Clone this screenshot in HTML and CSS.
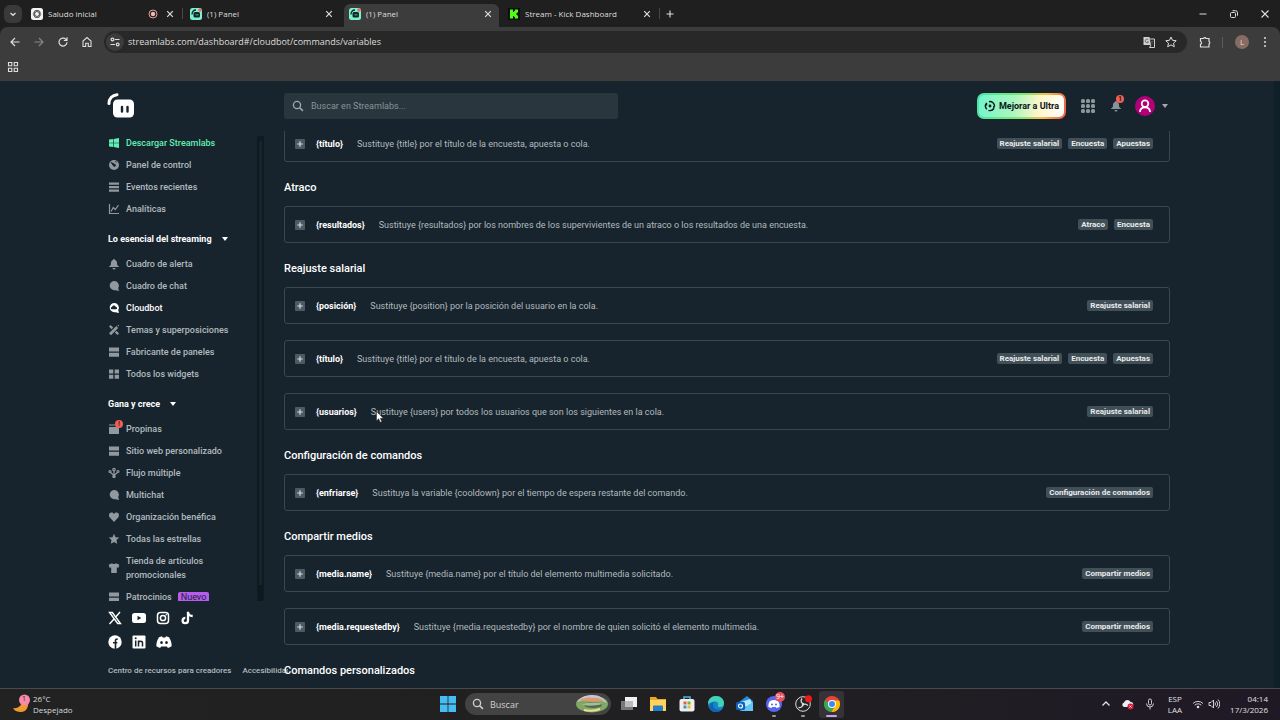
FILE: index.html
```html
<!DOCTYPE html>
<html lang="es">
<head>
<meta charset="utf-8">
<title>(1) Panel</title>
<link rel="stylesheet" href="styles.css">
</head>
<body>
<svg class="defs" width="0" height="0" aria-hidden="true">
  <symbol id="x" viewBox="0 0 10 10"><path d="M2.2 2.2l5.6 5.6M7.8 2.2L2.2 7.8" stroke="currentColor" stroke-width="1.2" fill="none"/></symbol>
  <symbol id="panel" viewBox="0 0 12 12"><rect width="12" height="12" rx="2.5" fill="#7cf2cd"/><path d="M2 6.5C2 3.500 3.500 2 6 2" stroke="#12252c" stroke-width="1.300" fill="none"/><rect x="3.500" y="4" width="6.500" height="5.500" rx="1.500" fill="#12252c"/><path d="M5.500 6h3v1.500h-3z" fill="#42826f"/><circle cx="10" cy="2" r="1.800" fill="#ee6868"/></symbol>
  <symbol id="plus" viewBox="0 0 10 10"><rect width="10" height="10" rx="1" fill="#4d5a62"/><path d="M5 2.200v5.600M2.200 5h5.600" stroke="#d5dadd" stroke-width="1.200"/></symbol>
  <symbol id="bell" viewBox="0 0 12 12"><path d="M6 1a1 1 0 0 1 1 1c1.500.5 2 1.700 2 3 0 2 .5 2.800 2 3.500V9H1v-.5C2.500 7.800 3 7 3 5c0-1.300.5-2.500 2-3a1 1 0 0 1 1-1zM4.500 10h3a1.500 1.500 0 0 1-3 0z" fill="currentColor"/></symbol>
  <symbol id="chat" viewBox="0 0 12 12"><path d="M6 1a5 4.600 0 1 0 1.500 9.200L11 11l-.8-3A4.600 4.600 0 0 0 6 1z" fill="currentColor"/></symbol>
  <symbol id="bars" viewBox="0 0 12 12"><path d="M1 1.500h10v4H1zM1 6.800h10v4H1z" fill="currentColor"/></symbol>
  <symbol id="search" viewBox="0 0 12 12"><circle cx="5" cy="5" r="3.600" fill="none" stroke="currentColor" stroke-width="1.300"/><path d="M7.700 7.700l3.200 3.200" stroke="currentColor" stroke-width="1.500"/></symbol>
  <symbol id="caret" viewBox="0 0 8 6"><path d="M1 1h6L4 5z" fill="currentColor"/></symbol>
</svg>

<header class="browser">
  <div class="tabstrip">
    <button class="tab-search" aria-label="Buscar pestañas"><svg viewBox="0 0 10 10"><path d="M2.500 4L5 6.300 7.500 4" fill="none" stroke="currentColor" stroke-width="1.300"/></svg></button>
    <div class="tab">
      <svg class="fav" viewBox="0 0 12 12"><rect width="12" height="12" rx="2.500" fill="#f5f5f5"/><g fill="none" stroke="#333" stroke-width=".6"><ellipse cx="6" cy="6" rx="4" ry="2.300"/><ellipse cx="6" cy="6" rx="4" ry="2.300" transform="rotate(60 6 6)"/><ellipse cx="6" cy="6" rx="4" ry="2.300" transform="rotate(120 6 6)"/></g></svg>
      <span class="tab-title">Saludo inicial</span>
      <svg class="rec" viewBox="0 0 10 10"><circle cx="5" cy="5" r="4" fill="none" stroke="#e0a0a0"/><circle cx="5" cy="5" r="2.200" fill="#f2b8b5"/></svg>
      <button aria-label="Cerrar"><svg><use href="#x"/></svg></button>
    </div>
    <div class="tab plain">
      <svg class="fav"><use href="#panel"/></svg><span class="tab-title">(1) Panel</span>
      <button aria-label="Cerrar"><svg><use href="#x"/></svg></button>
    </div>
    <div class="tab active">
      <svg class="fav"><use href="#panel"/></svg><span class="tab-title">(1) Panel</span>
      <button aria-label="Cerrar"><svg><use href="#x"/></svg></button>
    </div>
    <div class="tab">
      <svg class="fav" viewBox="0 0 12 12"><path fill="#061006" d="M0 0h12v12H0z"/><path d="M2 1.500h3v2.500h1V3h1V1.500h3V4.500H9v1H8v1h1v1h1v3H7V9H6V8H5v2.500H2z" fill="#53fc18"/></svg>
      <span class="tab-title">Stream - Kick Dashboard</span>
      <button aria-label="Cerrar"><svg><use href="#x"/></svg></button>
    </div>
    <button class="new-tab" aria-label="Nueva pestaña"><svg viewBox="0 0 10 10"><path d="M5 1.500v7M1.500 5h7" stroke="currentColor" stroke-width="1.100"/></svg></button>
    <div class="window-controls">
      <button aria-label="Minimizar"><svg viewBox="0 0 10 10"><path d="M1.500 5h7" stroke="currentColor"/></svg></button>
      <button aria-label="Restaurar"><svg viewBox="0 0 10 10"><rect x="1.500" y="3.500" width="5" height="5" rx="1" fill="none" stroke="currentColor"/><path d="M3.500 1.700h3a2 2 0 0 1 2 2v3" fill="none" stroke="currentColor"/></svg></button>
      <button aria-label="Cerrar ventana"><svg viewBox="0 0 10 10"><path d="M1.500 1.500l7 7M8.500 1.500l-7 7" stroke="currentColor" stroke-width="1.100"/></svg></button>
    </div>
  </div>
  <div class="toolbar">
    <button aria-label="Atrás"><svg viewBox="0 0 12 12"><path d="M10.500 6H2M6 2L2 6l4 4" fill="none" stroke="currentColor" stroke-width="1.200"/></svg></button>
    <button class="dim" aria-label="Adelante"><svg viewBox="0 0 12 12"><path d="M1.500 6H10M6 2l4 4-4 4" fill="none" stroke="currentColor" stroke-width="1.200"/></svg></button>
    <button aria-label="Recargar"><svg viewBox="0 0 12 12"><path d="M10 6.300A4 4 0 1 1 8.800 3.200L10 4.400M10 1.300v3.200H6.800" fill="none" stroke="currentColor" stroke-width="1.200"/></svg></button>
    <button aria-label="Inicio"><svg viewBox="0 0 12 12"><path d="M2 10.500V5l4-3.500L10 5v5.500H7.300V7.200H4.700v3.300z" fill="none" stroke="currentColor" stroke-width="1.100"/></svg></button>
    <div class="omnibox">
      <button class="site-info" aria-label="Información del sitio"><svg viewBox="0 0 12 12"><g fill="none" stroke="currentColor" stroke-width="1.200"><circle cx="3.500" cy="3.500" r="1.400"/><path d="M6 3.500h4.500M1.500 8.500H6"/><circle cx="8.700" cy="8.500" r="1.400"/></g></svg></button>
      <input class="url" aria-label="Dirección" value="streamlabs.com/dashboard#/cloudbot/commands/variables">
      <button aria-label="Traducir"><svg viewBox="0 0 12 12"><path d="M.5 1h6l1.500 8H.5z" fill="#d0d0d0"/><path d="M7 3h4.500v8.500H6.500L8 9" fill="none" stroke="#d0d0d0"/><path d="M5.500 3.800A1.800 1.800 0 1 0 5.500 6H4M7.700 5.500h3M9.200 4.500v1c0 1.500-.5 2.300-1.200 3M8.200 6.500l2 2" stroke="#555" stroke-width=".8" fill="none"/></svg></button>
      <button aria-label="Añadir a favoritos"><svg viewBox="0 0 12 12"><path d="M6 1l1.500 3.300 3.700.4-2.700 2.400.8 3.600L6 8.900l-3.300 1.800.8-3.600L.8 4.700l3.700-.4z" fill="none" stroke="currentColor"/></svg></button>
    </div>
    <button class="ext" aria-label="Extensiones"><svg viewBox="0 0 12 12"><path d="M1.500 2.500h3a1.400 1.400 0 0 1 2.600 0h2.900v3a1.400 1.400 0 0 1 0 2.500v3H1.500V8.300a1.600 1.600 0 0 0 0-3z" fill="none" stroke="currentColor" stroke-width="1.200"/></svg></button>
    <span class="divider"></span>
    <button class="profile" aria-label="Perfil">L</button>
    <button aria-label="Menú"><svg viewBox="0 0 12 12"><g fill="currentColor"><circle cx="6" cy="2" r="1"/><circle cx="6" cy="6" r="1"/><circle cx="6" cy="10" r="1"/></g></svg></button>
  </div>
  <div class="bookmarks"><button aria-label="Aplicaciones"><svg viewBox="0 0 12 12"><path d="M1.500 1.500h3.300v3.300H1.500zM7.200 1.500h3.300v3.300H7.200zM1.500 7.200h3.300v3.300H1.500zM7.200 7.200h3.300v3.300H7.200z" fill="none" stroke="currentColor" stroke-width="1.100"/></svg></button></div>
</header>

<div class="app">
  <div class="topbar">
    <a class="logo" href="#" aria-label="Streamlabs"><svg viewBox="0 0 28 26"><path d="M2 10.500C2 5.500 5.500 2 10 1.700" fill="none" stroke="#fff" stroke-width="3" stroke-linecap="round"/><rect x="6" y="6.500" width="21" height="18" rx="4.500" fill="#fff"/><path d="M15 14v4.500M20.500 14v4.500" stroke="#17242d" stroke-width="2.400" stroke-linecap="round"/></svg></a>
    <label class="searchbox"><svg><use href="#search"/></svg><input type="text" placeholder="Buscar en Streamlabs..." aria-label="Buscar en Streamlabs"></label>
    <div class="account">
      <button class="ultra"><svg viewBox="0 0 12 12"><path d="M2.800 9.200A4.500 4.500 0 0 1 2.500 3.200M5 1.700a4.500 4.500 0 0 1 5.500 4.800M9.800 8.500A4.500 4.500 0 0 1 4.500 10.300M2.500 5.500V2.800M9.800 8.500V6" fill="none" stroke="#09161d" stroke-width="1.400"/><circle cx="6" cy="6" r="1.400" fill="#09161d"/></svg>Mejorar a Ultra</button>
      <button class="apps" aria-label="Aplicaciones"><svg viewBox="0 0 16 16"><g fill="#8d979d"><rect x="1" y="1" width="4" height="4" rx="1.500"/><rect x="6" y="1" width="4" height="4" rx="1.500"/><rect x="11" y="1" width="4" height="4" rx="1.500"/><rect x="1" y="6" width="4" height="4" rx="1.500"/><rect x="6" y="6" width="4" height="4" rx="1.500"/><rect x="11" y="6" width="4" height="4" rx="1.500"/><rect x="1" y="11" width="4" height="4" rx="1.500"/><rect x="6" y="11" width="4" height="4" rx="1.500"/><rect x="11" y="11" width="4" height="4" rx="1.500"/></g></svg></button>
      <button class="alerts" aria-label="Notificaciones"><svg><use href="#bell"/></svg><span class="count">1</span></button>
      <button class="user" aria-label="Cuenta"><svg class="face" viewBox="0 0 20 20"><circle cx="10" cy="10" r="10" fill="#b40078"/><circle cx="10" cy="7.700" r="3.300" fill="none" stroke="#fff" stroke-width="1.700"/><path d="M5 16c0-3 2-4.700 5-4.700s5 1.700 5 4.700" fill="none" stroke="#fff" stroke-width="1.700"/></svg><svg class="caret"><use href="#caret"/></svg></button>
    </div>
  </div>

  <div class="columns">
    <aside class="sidebar">
      <div class="nav-scroll">
        <nav>
          <a class="item green" href="#"><svg viewBox="0 0 12 12"><path d="M1 2.500L5.200 2v3.700H1zM5.800 1.900L11 1v4.700H5.800zM1 6.300h4.200V10L1 9.500zM5.800 6.300H11V11l-5.200-.9z" fill="currentColor"/></svg>Descargar Streamlabs</a>
          <a class="item" href="#"><svg viewBox="0 0 12 12"><circle cx="6" cy="6" r="5" fill="currentColor"/><path d="M3 3.300L7.200 5.500a1 1 0 0 1-1.500 1.700zM7 2.300l1.800 1" stroke="#17242d" fill="#17242d" stroke-width=".8"/></svg>Panel de control</a>
          <a class="item" href="#"><svg viewBox="0 0 12 12"><path d="M1 1.500h10v2.300H1zM1 5h10v2.300H1zM1 8.500h10v2.300H1z" fill="currentColor"/></svg>Eventos recientes</a>
          <a class="item" href="#"><svg viewBox="0 0 12 12"><path d="M1.500 1v9.500H11M3 8.500l2.300-4 2 2L10.500 2" fill="none" stroke="currentColor" stroke-width="1.200"/></svg>Analíticas</a>
          <button class="group">Lo esencial del streaming<svg><use href="#caret"/></svg></button>
          <a class="item" href="#"><svg><use href="#bell"/></svg>Cuadro de alerta</a>
          <a class="item" href="#"><svg><use href="#chat"/></svg>Cuadro de chat</a>
          <a class="item current" href="#"><svg viewBox="0 0 12 12"><use href="#chat" width="12" height="12"/><path d="M4 7.300a1.200 1.200 0 0 1 0-2.400 2 2 0 0 1 3.800 0 1.200 1.200 0 0 1 .2 2.400z" fill="#17242d"/></svg>Cloudbot</a>
          <a class="item" href="#"><svg viewBox="0 0 12 12"><path d="M1 9.300L8.300 2l1.900 1.900L3 11.200zM1 2.500L2.500 1l2.700 2.500-1.700 1.700zM8.500 6.800L11 9.500 9.500 11 6.800 8.500zM9.300 1.200l.9-.5 1 1-.5.900z" fill="currentColor"/></svg>Temas y superposiciones</a>
          <a class="item" href="#"><svg><use href="#bars"/></svg>Fabricante de paneles</a>
          <a class="item" href="#"><svg viewBox="0 0 12 12"><path d="M1 1.500h4.300v4H1zM6.700 1.500H11v4H6.700zM1 6.800h4.300v4H1zM6.700 6.800H11v4H6.700z" fill="currentColor"/></svg>Todos los widgets</a>
          <button class="group">Gana y crece<svg><use href="#caret"/></svg></button>
          <a class="item" href="#"><span class="mark"><svg viewBox="0 0 12 12"><path d="M1 1.500h7v1H1zM1 4h10v7H1z" fill="currentColor"/></svg><span class="warn">!</span></span>Propinas</a>
          <a class="item" href="#"><svg><use href="#bars"/></svg>Sitio web personalizado</a>
          <a class="item" href="#"><svg viewBox="0 0 12 12"><g fill="none" stroke="currentColor" stroke-width="1.200"><circle cx="6" cy="2.500" r="1.200"/><circle cx="2" cy="4.500" r="1"/><circle cx="10" cy="4.500" r="1"/><path d="M6 4v4M2.500 5.500L6 8.500l3.500-3"/></g><circle cx="6" cy="9.500" r="1.700" fill="currentColor"/></svg>Flujo múltiple</a>
          <a class="item" href="#"><svg><use href="#chat"/></svg>Multichat</a>
          <a class="item" href="#"><svg viewBox="0 0 12 12"><path d="M6 11L1.800 6.500C.3 4.500 1 1.500 3.500 1.500 4.800 1.500 5.600 2.200 6 3c.4-.8 1.200-1.500 2.500-1.500 2.500 0 3.200 3 1.700 5z" fill="currentColor"/></svg>Organización benéfica</a>
          <a class="item" href="#"><svg viewBox="0 0 12 12"><path d="M6 .8l1.500 3.400 3.700.4-2.700 2.500.7 3.700L6 9l-3.200 1.800.7-3.700L.8 4.600l3.700-.4z" fill="currentColor"/></svg>Todas las estrellas</a>
          <a class="item" href="#"><svg viewBox="0 0 12 12"><path d="M4 1.300c.6 1 3.400 1 4 0l3.300 1.400-.8 3-1.700-.2V11H3.200V5.500l-1.700.2-.8-3z" fill="currentColor"/></svg><span>Tienda de artículos promocionales</span></a>
          <a class="item" href="#"><svg><use href="#bars"/></svg>Patrocinios<span class="new">Nuevo</span></a>
        </nav>
        <div class="nav-track"><span></span></div>
      </div>
      <div class="social">
        <div>
          <a href="#" aria-label="X"><svg viewBox="0 0 14 14"><path d="M1.500 1.500h2.800l8.200 11H9.700z" fill="none" stroke="#fff" stroke-width="1.400"/><path d="M12 1L7.700 6M6 8l-4.500 5" stroke="#fff" stroke-width="1.400"/></svg></a>
          <a href="#" aria-label="YouTube"><svg viewBox="0 0 14 14"><rect y="2" width="14" height="10" rx="2.500" fill="#fff"/><path d="M5.500 4.800v4.400L9.300 7z" fill="#17242d"/></svg></a>
          <a href="#" aria-label="Instagram"><svg viewBox="0 0 14 14"><g fill="none" stroke="#fff" stroke-width="1.500"><rect x="1.500" y="1.500" width="11" height="11" rx="3"/><circle cx="7" cy="7" r="2.600"/></g><circle cx="10.200" cy="3.800" r=".8" fill="#fff"/></svg></a>
          <a href="#" aria-label="TikTok"><svg viewBox="0 0 14 14"><path d="M8 .8v8.700A2.700 2.700 0 1 1 5.300 6.800M8 1c.2 2.500 2 3.900 4.700 4" fill="none" stroke="#fff" stroke-width="2.300"/></svg></a>
        </div>
        <div>
          <a href="#" aria-label="Facebook"><svg viewBox="0 0 14 14"><circle cx="7" cy="7" r="6.700" fill="#fff"/><path d="M7.500 14V5.800c0-1.300.7-1.800 2.200-1.600M5 7.800h4.300" fill="none" stroke="#17242d" stroke-width="1.600"/></svg></a>
          <a href="#" aria-label="LinkedIn"><svg viewBox="0 0 14 14"><rect x=".5" y=".5" width="13" height="13" rx="1" fill="#fff"/><path d="M3.700 5.500v6M6.500 11.500v-6M6.500 8c0-2.300 4-2.300 4 0v3.500" fill="none" stroke="#17242d" stroke-width="1.500"/><circle cx="3.700" cy="3.300" r="1" fill="#17242d"/></svg></a>
          <a class="wide" href="#" aria-label="Discord"><svg viewBox="0 0 16 14"><path d="M3 2.200L6 1.300l.6 1.100h2.800l.6-1.100 3 .9c2 2.900 2.800 6 2.600 9-1.200.9-2.500 1.400-3.700 1.700l-1-1.500H5.100l-1 1.500C2.900 12.600 1.600 12.100.4 11.200c-.2-3 .6-6.100 2.600-9z" fill="#fff"/><ellipse cx="5.500" cy="7.500" rx="1.300" ry="1.500" fill="#17242d"/><ellipse cx="10.500" cy="7.500" rx="1.300" ry="1.500" fill="#17242d"/></svg></a>
        </div>
      </div>
      <footer class="legal"><a href="#">Centro de recursos para creadores</a><a href="#">Accesibilidad</a></footer>
    </aside>

    <main class="content">
      <div class="variables">
        <div class="row"><button aria-label="Añadir"><svg><use href="#plus"/></svg></button><b>{título}</b><p>Sustituye {title} por el título de la encuesta, apuesta o cola.</p><span class="tag">Reajuste salarial</span><span class="tag">Encuesta</span><span class="tag">Apuestas</span></div>
        <h2>Atraco</h2>
        <div class="row"><button aria-label="Añadir"><svg><use href="#plus"/></svg></button><b>{resultados}</b><p>Sustituye {resultados} por los nombres de los supervivientes de un atraco o los resultados de una encuesta.</p><span class="tag">Atraco</span><span class="tag">Encuesta</span></div>
        <h2>Reajuste salarial</h2>
        <div class="row"><button aria-label="Añadir"><svg><use href="#plus"/></svg></button><b>{posición}</b><p>Sustituye {position} por la posición del usuario en la cola.</p><span class="tag">Reajuste salarial</span></div>
        <div class="row"><button aria-label="Añadir"><svg><use href="#plus"/></svg></button><b>{título}</b><p>Sustituye {title} por el título de la encuesta, apuesta o cola.</p><span class="tag">Reajuste salarial</span><span class="tag">Encuesta</span><span class="tag">Apuestas</span></div>
        <div class="row"><button aria-label="Añadir"><svg><use href="#plus"/></svg></button><b>{usuarios}</b><p>Sustituye {users} por todos los usuarios que son los siguientes en la cola.</p><span class="tag">Reajuste salarial</span></div>
        <h2>Configuración de comandos</h2>
        <div class="row"><button aria-label="Añadir"><svg><use href="#plus"/></svg></button><b>{enfriarse}</b><p>Sustituya la variable {cooldown} por el tiempo de espera restante del comando.</p><span class="tag">Configuración de comandos</span></div>
        <h2>Compartir medios</h2>
        <div class="row"><button aria-label="Añadir"><svg><use href="#plus"/></svg></button><b>{media.name}</b><p>Sustituye {media.name} por el título del elemento multimedia solicitado.</p><span class="tag">Compartir medios</span></div>
        <div class="row"><button aria-label="Añadir"><svg><use href="#plus"/></svg></button><b>{media.requestedby}</b><p>Sustituye {media.requestedby} por el nombre de quien solicitó el elemento multimedia.</p><span class="tag">Compartir medios</span></div>
        <h2>Comandos personalizados</h2>
      </div>
    </main>
  </div>
  <div class="page-track"></div>
</div>

<footer class="taskbar">
  <button class="weather"><svg viewBox="0 0 20 20"><path d="M1 14c4 1 9-2 9-7l6 1c1 5-2 10-7 10-4 0-7-1.500-8-4z" fill="#f09a2d"/><circle cx="12.500" cy="6" r="5.500" fill="#f68aa8"/></svg><span class="weather-count">1</span><span>26°C<br>Despejado</span></button>
  <div class="dock">
    <button class="start" aria-label="Inicio"><svg viewBox="0 0 16 16"><path d="M0 0h7.600v7.600H0zM8.400 0H16v7.600H8.400zM0 8.400h7.600V16H0zM8.400 8.400H16V16H8.400z" fill="#45bdf2"/></svg></button>
    <label class="task-search"><svg class="lens"><use href="#search"/></svg><input type="text" placeholder="Buscar" aria-label="Buscar"><svg class="scene" viewBox="0 0 32 18"><ellipse cx="16" cy="9" rx="16" ry="8.500" fill="#7fa865"/><path d="M1 7C5 1 11 0 17 0s11 3 14 8c-8-4-20-5-30-1z" fill="#c8c4d8"/><path d="M3 5c5-2 9-3 13-2 5-1 9 1 12 3-8 1-17 1-25-1z" fill="#d99a6c"/><ellipse cx="17" cy="10" rx="9" ry="3" fill="#4a6b51"/><path d="M6 10c5-3 15-3 20-1-5 2-13 2-20 1z" fill="#a8bc90"/><path d="M8 15c5 1 11 1 16-1" stroke="#efdd91" stroke-width="2" fill="none"/></svg></label>
    <button class="app-icon" aria-label="Vista de tareas"><svg viewBox="0 0 18 18"><path d="M1 6h12v9H1z" fill="#777"/><path d="M5 2h12v10H5z" fill="#f1f1f1"/><path d="M5 6h8v6H5z" fill="#bbb"/></svg></button>
    <button class="app-icon" aria-label="Explorador"><svg viewBox="0 0 18 18"><path d="M1 2h6l1.500 2H17v12H1z" fill="#e9a820"/><path d="M1 5h16v11H1z" fill="#ffd35c"/><path d="M4 11.500a1 1 0 0 1 1-1h8a1 1 0 0 1 1 1V16H4z" fill="#237fc9"/></svg></button>
    <button class="app-icon" aria-label="Tienda"><svg viewBox="0 0 18 18"><path d="M6 4V2h6v2" fill="none" stroke="#46b7e8" stroke-width="1.500"/><rect x="1.500" y="4" width="15" height="12.500" rx="2" fill="#eee"/><path d="M5.500 6.500h3v3h-3z" fill="#ef5b35"/><path d="M9.500 6.500h3v3h-3z" fill="#7ab52d"/><path d="M5.500 10.500h3v3h-3z" fill="#239ee2"/><path d="M9.500 10.500h3v3h-3z" fill="#f7b824"/></svg></button>
    <button class="app-icon" aria-label="Edge"><svg viewBox="0 0 18 18"><circle cx="9" cy="9" r="8" fill="#1685cf"/><path d="M1 9C1 4 4.500 1 9 1c5 0 8 3.500 8 7 0 3-2 4-4 4-1.500 0-2.500-.5-2-1.500 1-2-.5-4-3-4C5 6.500 2.500 8 1 9z" fill="#42d2b5"/><path d="M6 9c0 5 4 6.500 8 5-3 4.500-10 4-11.500-1C2 9 5 7 8 7c-1 .5-2 1-2 2z" fill="#1264b0"/></svg></button>
    <button class="app-icon" aria-label="Correo"><svg viewBox="0 0 18 18"><path d="M3 7l8-6 6 5v10H4z" fill="#238ddc"/><path d="M5 7l9-3 2 4-6 4z" fill="#b4e8ff"/><path d="M5 16l12-9v9z" fill="#62c7f6"/><rect y="7" width="9" height="8" rx="1.500" fill="#1260bd"/><circle cx="4.500" cy="11" r="2" fill="none" stroke="#fff" stroke-width="1.200"/></svg></button>
    <button class="app-icon running" aria-label="Discord"><svg viewBox="0 0 18 18"><circle cx="9" cy="9" r="8" fill="#5865f2"/><path d="M5 6c3-1.500 5-1.500 8 0 1.500 2 1.800 4 1.500 6l-3 1-.7-1H7.200l-.7 1-3-1C3.200 10 3.500 8 5 6z" fill="#fff"/><circle cx="7" cy="9.500" r="1" fill="#5865f2"/><circle cx="11" cy="9.500" r="1" fill="#5865f2"/></svg><span class="bubble">9+</span></button>
    <button class="app-icon running" aria-label="OBS"><svg viewBox="0 0 18 18"><circle cx="9" cy="9" r="7.300" fill="#242326" stroke="#ddd"/><path d="M8 3.500c-2 2.500-.5 5 2 5.300M13.800 10.500c-2-2.500-5-1.500-5.300 1M4.500 12.500c3 .5 5-1.500 3.800-4" fill="none" stroke="#ddd" stroke-width="1.300"/><circle cx="14.500" cy="3.800" r="3.500" fill="#f01818"/></svg></button>
    <button class="app-icon running focused" aria-label="Chrome"><svg viewBox="0 0 18 18"><circle cx="9" cy="9" r="8" fill="#ea4335"/><path d="M9 9L2 5.200A8 8 0 0 0 8.500 17L12 11z" fill="#34a853"/><path d="M9 5.500h7.200A8 8 0 0 1 8.500 17L12 11z" fill="#fbbc05"/><circle cx="9" cy="9" r="4" fill="#fff"/><circle cx="9" cy="9" r="3" fill="#4285f4"/></svg></button>
  </div>
  <div class="tray">
    <button aria-label="Mostrar iconos ocultos"><svg viewBox="0 0 12 12"><path d="M2.500 7.500L6 4l3.500 3.500" fill="none" stroke="currentColor" stroke-width="1.300"/></svg></button>
    <button aria-label="OneDrive"><svg viewBox="0 0 12 12"><path d="M2.500 9A2.300 2.300 0 0 1 2 4.500 3.500 3.500 0 0 1 8.500 4 2.500 2.500 0 0 1 9 9z" fill="#eee"/><circle cx="8.500" cy="8.500" r="3" fill="#d81939"/><path d="M7.500 7.500l2 2M9.500 7.500l-2 2" stroke="#fff" stroke-width=".8"/></svg></button>
    <button aria-label="Micrófono"><svg viewBox="0 0 12 12"><rect x="4.500" y="1" width="3" height="6" rx="1.500" fill="none" stroke="currentColor" stroke-width=".9"/><path d="M2.500 5.500a3.500 3.500 0 0 0 7 0M6 9v2.500" fill="none" stroke="currentColor" stroke-width=".9"/></svg></button>
    <button class="lang">ESP<br>LAA</button>
    <button class="net" aria-label="Red y volumen"><svg viewBox="0 0 12 12"><path d="M1 5.500a7 7 0 0 1 10 0M2.700 7.200a4.700 4.700 0 0 1 6.600 0" fill="none" stroke="currentColor" stroke-width=".9"/><circle cx="6" cy="9" r="1.300" fill="currentColor"/></svg><svg viewBox="0 0 12 12"><path d="M1 4.500h2L5.500 2v8L3 7.500H1zM7 4.500a2.500 2.500 0 0 1 0 3M8.500 3a4.500 4.500 0 0 1 0 6M10 1.500a6.500 6.500 0 0 1 0 9" fill="none" stroke="currentColor" stroke-width=".9"/></svg></button>
    <button class="clock">04:14<br>17/3/2026</button>
  </div>
</footer>
<svg class="pointer" viewBox="0 0 8 12" aria-hidden="true"><path d="M.5.5v9.300l2.200-2 1.500 3.500 1.600-.7-1.500-3.300h3z" fill="#fff" stroke="#222" stroke-width=".5"/></svg>
</body>
</html>
```
FILE: styles.css
```css
* { box-sizing: border-box; }
body { margin: 0; height: 100vh; display: flex; flex-direction: column; overflow: hidden; background: #17242d; color: #fff; font-family: Roboto, "Liberation Sans", sans-serif; font-size: 9px; line-height: 14px; }
button { border: 0; padding: 0; background: none; color: inherit; font: inherit; display: flex; align-items: center; justify-content: center; flex: none; }
input { border: 0; padding: 0; background: none; color: inherit; font: inherit; outline: 0; min-width: 0; flex: 1; }
a { color: inherit; text-decoration: none; }
svg { display: block; flex: none; width: 12px; height: 12px; }
.defs { position: absolute; width: 0; height: 0; }

/* Browser frame */
.browser { flex: none; background: #1f1f1f; color: #dedede; font-family: "Open Sans", "Noto Sans", sans-serif; }
.tabstrip { display: flex; align-items: center; height: 27px; padding-left: 4px; font-size: 8px; }
.tabstrip button svg, .rec { width: 10px; height: 10px; }
.tab-search { width: 18px; height: 18px; border-radius: 6px; background: #3a3a3a; margin-right: 2px; }
.tab { display: flex; align-items: center; gap: 5px; width: 159px; height: 23px; align-self: flex-end; padding: 0 8px 4px 7px; position: relative; }
.tab-title { flex: 1; white-space: nowrap; overflow: hidden; }
.tab .rec { margin-right: 2px; }
.tab:not(.active):not(.plain)::after { content: ""; position: absolute; right: 0; top: 4px; width: 1px; height: 11px; background: #484848; }
.tab.active::before { content: ""; position: absolute; inset: 0 2px; background: #3c3c3c; border-radius: 6px 6px 0 0; }
.tab.active > * { position: relative; }
.new-tab { width: 20px; }
.window-controls { display: flex; margin-left: auto; }
.window-controls button { width: 31px; height: 27px; }
.toolbar { display: flex; align-items: center; height: 30px; padding: 0 9px; background: #3c3c3c; border-radius: 8px 8px 0 0; }
.toolbar > button { width: 12px; margin-right: 12px; }
.toolbar > button:last-child { margin-right: 0; }
.toolbar .dim { color: #858585; }
.toolbar > button:nth-child(4) { margin-right: 11px; }
.omnibox { flex: 1; display: flex; align-items: center; gap: 10px; height: 22px; padding: 0 10px 0 2px; border-radius: 11px; background: #282828; }
.site-info { width: 18px; height: 18px; border-radius: 9px; background: #3c3c3c; }
.url { font-size: 9px; margin-left: -6px; }
.toolbar .ext { margin: 0 11px 0 12px; }
.divider { width: 1px; height: 11px; background: #5c5c5c; margin-right: 12px; }
.toolbar .profile { width: 14px; height: 14px; border-radius: 7px; background: #886b63; font-size: 8px; line-height: 14px; margin-right: 10px; }
.bookmarks { height: 24px; padding: 4px 7px; background: #3c3c3c; }

/* Application */
.app { flex: 1; min-height: 0; display: flex; flex-direction: column; padding: 0 110px 0 108px; position: relative; }
.page-track { position: absolute; top: 0; right: 0; bottom: 0; width: 6px; background: #10202a; }
.topbar { flex: none; display: flex; align-items: center; height: 50px; }
.logo { width: 176px; }
.logo svg { width: 28px; height: 26px; margin-left: -1px; }
.searchbox { display: flex; align-items: center; gap: 7px; width: 334px; height: 26px; padding: 0 8px; border-radius: 3px; background: #2a363e; color: #a0a9ae; }
.searchbox input::placeholder { color: #899399; opacity: 1; }
.account { display: flex; align-items: center; margin-left: auto; padding-right: 1px; }
.ultra { gap: 3px; height: 26px; padding: 0 5px; border: 2px solid transparent; border-radius: 7px; color: #09161d; font-weight: 700; background: linear-gradient(100deg, #72f5cb, #a8f5bd 40%, #fff6c9 70%, #fff) padding-box, linear-gradient(100deg, #4be3aa, #7de873 50%, #f5bd4d 75%, #ee5a45) border-box; }
.apps { margin-left: 14px; }
.apps svg { width: 16px; height: 16px; }
.alerts { position: relative; margin-left: 14px; color: #89949a; }
.count { position: absolute; left: 6px; top: -5px; width: 8px; height: 8px; border-radius: 4px; background: #f45d52; color: #17242d; font-size: 7px; line-height: 8px; font-weight: 700; text-align: center; }
.user { gap: 6px; margin-left: 13px; color: #a0a9ae; }
.user .face { width: 20px; height: 20px; }
.user .caret, .group svg { width: 8px; height: 6px; }
.columns { flex: 1; min-height: 0; display: flex; gap: 20px; }
.sidebar { flex: none; width: 156px; display: flex; flex-direction: column; padding-top: 1px; }
.nav-scroll { flex: 1; min-height: 0; overflow: hidden; display: flex; justify-content: space-between; }
.item { display: flex; align-items: center; gap: 6px; width: 134px; padding: 4px 0; color: #b2babf; font-weight: 500; white-space: nowrap; }
.item svg { width: 12px; height: 12px; color: #8f999f; }
.item > span:not([class]) { white-space: normal; }
.item.green, .item.green svg { color: #62efb4; }
.item.current, .item.current svg { color: #fff; }
.group { gap: 9px; padding: 12px 0 7px; font-weight: 700; }
.mark { position: relative; }
.warn { position: absolute; left: 7px; top: -3px; width: 8px; height: 8px; border-radius: 4px; background: #f45d52; color: #17242d; font-size: 7px; line-height: 8px; text-align: center; }
.new { padding: 0 3px; border-radius: 2px; background: #b65df0; color: #17242d; font-weight: 400; line-height: 10px; }
.nav-track { width: 7px; margin-top: 4px; border: 1px solid #101a21; border-width: 5px 2px 0; display: flex; align-items: flex-end; }
.nav-track span { flex: 1; height: 16px; background: #0f181f; }
.social { flex: none; display: grid; gap: 10px; padding: 10px 0 15px; }
.social div { display: flex; gap: 10px; }
.social svg { width: 14px; height: 14px; }
.social .wide svg { width: 16px; }
.legal { flex: none; display: flex; gap: 11px; width: 180px; margin-bottom: 10px; overflow: hidden; white-space: nowrap; color: #b2babf; font-size: 8px; font-weight: 500; }
.content { flex: 1; min-width: 0; overflow: hidden; position: relative; }
.variables { margin-top: -6px; }
.row { display: flex; align-items: center; height: 37px; padding: 0 16px 0 10px; border: 1px solid #3b474f; border-radius: 3px; }
.row + .row { margin-top: 16px; }
.row svg { width: 10px; height: 10px; }
.row b { margin: 0 14px 0 11px; font-weight: 700; }
.row p { margin: 0 auto 0 0; color: #b2babf; }
.row b, .row p { white-space: nowrap; }
h2 { margin: 16px 0 8px; font-size: 11px; line-height: 20px; font-weight: 500; }
.tag { margin-left: 6px; padding: 0 3px; border-radius: 2px; background: #414f57; color: #e8ebed; font-size: 8px; line-height: 11px; font-weight: 700; white-space: nowrap; }

/* Taskbar */
.taskbar { flex: none; display: grid; grid-template-columns: 1fr auto 1fr; align-items: center; height: 32px; padding: 0 12px 1px; border-top: 1px solid #4a4a4c; background: linear-gradient(90deg, #222, #201f21 60%, #1f1926); font-family: "Open Sans", "Noto Sans", sans-serif; font-size: 8px; line-height: 11px; }
.weather { justify-self: start; text-align: left; gap: 1px; position: relative; color: #d8d8d8; }
.weather svg { width: 20px; height: 20px; }
.weather-count { position: absolute; left: 10px; top: 0; width: 5px; color: #40202c; font-size: 7px; }
.dock { display: flex; align-items: center; padding-left: 6px; }
.start svg { width: 16px; height: 16px; }
.task-search { display: flex; align-items: center; gap: 6px; width: 146px; height: 22px; margin: 0 3px 0 9px; padding: 0 3px 0 7px; border-radius: 11px; background: #434343; color: #d0d0d0; font-size: 9px; }
.task-search input::placeholder { color: #d0d0d0; opacity: 1; }
.task-search .scene { width: 32px; height: 18px; }
.app-icon { position: relative; width: 25px; height: 27px; margin: 0 2px; border-radius: 3px; }
.app-icon svg { width: 18px; height: 18px; }
.running::after { content: ""; position: absolute; bottom: 1px; width: 4px; height: 2px; border-radius: 1px; background: #999; }
.focused { background: #35323a; }
.focused::after { width: 11px; background: #c7a6e8; }
.bubble { position: absolute; right: 1px; top: 1px; width: 10px; height: 10px; border-radius: 5px; background: #e35261; font-size: 7px; line-height: 10px; }
.tray { justify-self: end; display: flex; align-items: center; gap: 10px; color: #e0e0e0; }
.tray .lang { margin-left: 2px; }
.tray .net { gap: 4px; }
.tray .clock { text-align: right; }
.pointer { position: absolute; left: 376px; top: 411px; width: 8px; height: 12px; }
```
